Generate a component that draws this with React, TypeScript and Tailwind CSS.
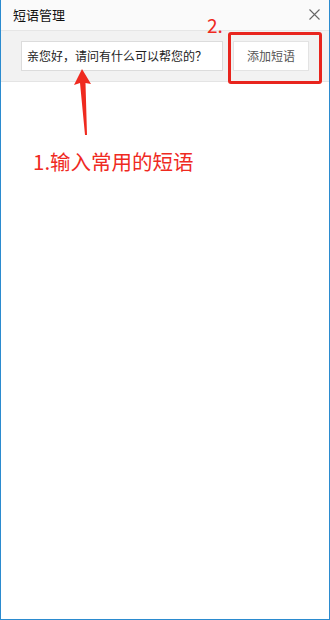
import React from 'react';

const cjk = { fontFamily: '"Noto Sans CJK SC", "Microsoft YaHei", sans-serif' };

function Arrow() {
  return (
    <svg className="absolute left-[72px] top-[69px]" width="20" height="68" viewBox="0 0 20 68">
      <path d="M9 0 L18 15 L12.5 14 L14 66 L12 66 L7 14 L1 16 Z" fill="#ef2a1f" />
    </svg>
  );
}

export default function App() {
  return (
    <div
      className="relative w-[330px] h-[620px] bg-white border-x border-b border-[#2b8bcf] overflow-hidden flex flex-col"
      style={cjk}
    >
      <div className="h-[31px] shrink-0 flex items-center justify-between pl-[12px] pr-[9px] bg-[#fafafa] border-b border-[#e6e6e6]">
        <span className="text-[13px] text-[#111]">短语管理</span>
        <svg width="11" height="11" viewBox="0 0 11 11" className="mb-[1px]">
          <path d="M0.5 0.5 L10.5 10.5 M10.5 0.5 L0.5 10.5" stroke="#666" strokeWidth="1.1" />
        </svg>
      </div>

      <div className="h-[51px] shrink-0 flex items-center gap-[10px] pl-[20px] bg-[#f2f2f2] border-b border-[#e4e4e4]">
        <div className="w-[202px] h-[30px] bg-white border border-[#dcdcdc] flex items-center pl-[5px]">
          <span className="text-[12px] text-[#222] whitespace-nowrap">亲您好，请问有什么可以帮您的？</span>
        </div>
        <div className="w-[76px] h-[30px] bg-white border border-[#e3e3e3] flex items-center justify-center">
          <span className="text-[12px] text-[#555]">添加短语</span>
        </div>
      </div>

      <div className="flex-1 bg-white" />

      <div className="absolute left-[227px] top-[32px] w-[94px] h-[52px] border-[3px] border-[#e8241d] rounded-[3px]" />
      <span className="absolute left-[206px] top-[13px] text-[19px] leading-[24px] text-[#ef2a1f]">2.</span>
      <Arrow />
      <span className="absolute left-[32px] top-[147px] text-[20.5px] leading-[28px] text-[#ef2a1f] whitespace-nowrap">
        1.输入常用的短语
      </span>
    </div>
  );
}
